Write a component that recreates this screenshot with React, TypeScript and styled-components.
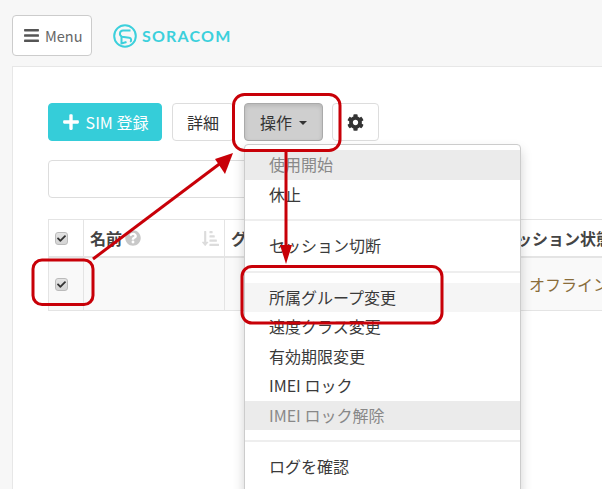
import React from "react";
import styled, { createGlobalStyle } from "styled-components";
import { FaBars, FaCheck, FaPlus, FaCog, FaQuestionCircle, FaSortAmountDownAlt } from "react-icons/fa";

const font = `"Noto Sans CJK JP", "Noto Sans", sans-serif`;

const GlobalStyle = createGlobalStyle`
  html, body {
    margin: 0;
    height: 100%;
    overflow: hidden;
    background: #f7f7f7;
  }
  * { box-sizing: border-box; }
`;

const items = [
  { label: "使用開始", state: "disabled" },
  { label: "休止" },
  { divider: true },
  { label: "セッション切断" },
  { divider: true },
  { label: "所属グループ変更", state: "hover" },
  { label: "速度クラス変更" },
  { label: "有効期限変更" },
  { label: "IMEI ロック" },
  { label: "IMEI ロック解除", state: "disabled" },
  { divider: true },
  { label: "ログを確認" },
  { label: "デバイス" },
];

export default function App() {
  return (
    <>
      <GlobalStyle />
      <Page>
        <Header>
          <MenuButton>
            <FaBars size={17} color="#555" />
            Menu
          </MenuButton>
          <Logo>
            <svg width="24" height="24" viewBox="0 0 24 24" fill="none" stroke="#3cd0dc" strokeWidth="2">
              <circle cx="12" cy="12" r="10.8" />
              <path d="M17.5 6.5H10a3.2 3.2 0 0 0-1 6.2l7.2 1a2.4 2.4 0 0 1 1 4.3" />
              <path d="M8.5 13v6.5l5-1.5" />
            </svg>
            <LogoText>SORACOM</LogoText>
          </Logo>
        </Header>
        <Panel>
          <Toolbar>
            <PrimaryButton>
              <FaPlus size={18} color="#fff" />
              SIM 登録
            </PrimaryButton>
            <Button>詳細</Button>
            <ActiveButton>
              操作
              <Caret />
            </ActiveButton>
            <GearButton>
              <FaCog size={17} color="#333" />
            </GearButton>
          </Toolbar>
          <SearchBox />
          <Table>
            <HeadRow>
              <CheckCell>
                <CheckMark>
                  <FaCheck size={9} color="#333" />
                </CheckMark>
              </CheckCell>
              <NameCell>
                名前
                <FaQuestionCircle size={16} color="#c8c8c8" />
                <SortIcon>
                  <FaSortAmountDownAlt size={17} color="#dcdcdc" />
                </SortIcon>
              </NameCell>
              <GroupCell>グループ</GroupCell>
              <StatusCell>セッション状態</StatusCell>
            </HeadRow>
            <BodyRow>
              <CheckCell>
                <CheckMark>
                  <FaCheck size={9} color="#333" />
                </CheckMark>
              </CheckCell>
              <NameCell />
              <GroupCell />
              <OfflineCell>オフライン</OfflineCell>
            </BodyRow>
          </Table>
        </Panel>
        <Dropdown>
          {items.map((item, i) =>
            item.divider ? <Divider key={i} /> : <Item key={i} $state={item.state}>{item.label}</Item>
          )}
        </Dropdown>
        <Annotations viewBox="0 0 602 489" width="602" height="489">
          <g fill="none" stroke="#c80008" strokeWidth="3">
            <rect x="233.5" y="94.5" width="106.5" height="56" rx="11" />
            <rect x="33" y="260" width="60" height="44.5" rx="9" />
            <rect x="242" y="266.5" width="200" height="56.5" rx="10" />
            <path d="M93 259L222 162" />
            <path d="M286 152V250" />
          </g>
          <path d="M233 153L215 159L225 174Z" fill="#c80008" />
          <path d="M286 264L280 245H292Z" fill="#c80008" />
        </Annotations>
      </Page>
    </>
  );
}

//#region components

const Page = styled.div`
  position: relative;
  width: 602px;
  height: 489px;
  overflow: hidden;
  padding: 15px 0 0 12px;
  font-family: ${font};
`;

const Header = styled.div`
  display: flex;
  align-items: center;
  gap: 21px;
  height: 41px;
`;

const MenuButton = styled.div`
  display: flex;
  align-items: center;
  gap: 5px;
  width: 80px;
  height: 41px;
  padding-left: 10px;
  background: #fff;
  border: 1px solid #ccc;
  border-radius: 4px;
  font-size: 14.5px;
  color: #666;
`;

const Logo = styled.div`
  display: flex;
  align-items: center;
  gap: 5px;
`;

const LogoText = styled.span`
  font-family: "Lato", sans-serif;
  font-size: 16px;
  font-weight: 700;
  letter-spacing: 1.2px;
  color: #3cd0dc;
`;

const Panel = styled.div`
  width: 620px;
  height: 440px;
  margin-top: 10px;
  padding: 36px 0 0 35px;
  background: #fff;
  border: 1px solid #e7e7e7;
`;

const Toolbar = styled.div`
  display: flex;
  align-items: center;
`;

const Button = styled.div`
  display: flex;
  align-items: center;
  justify-content: center;
  width: 62px;
  height: 38px;
  margin-left: 10px;
  background: #fff;
  border: 1px solid #ddd;
  border-radius: 4px;
  font-size: 16px;
  color: #333;
`;

const PrimaryButton = styled(Button)`
  gap: 6px;
  width: 114px;
  margin-left: 0;
  background: #35cdd9;
  border-color: #35cdd9;
  color: #fff;
`;

const ActiveButton = styled(Button)`
  gap: 7px;
  width: 79px;
  margin-left: 10px;
  background: #cfcfcf;
  border-color: #aaa;
  box-shadow: inset 0 2px 4px rgba(0, 0, 0, 0.12);
`;

const GearButton = styled(Button)`
  width: 47px;
  margin-left: 9px;
`;

const Caret = styled.span`
  width: 0;
  height: 0;
  margin-top: 2px;
  border-top: 4px solid #333;
  border-left: 4px solid transparent;
  border-right: 4px solid transparent;
`;

const SearchBox = styled.div`
  width: 400px;
  height: 38px;
  margin-top: 19px;
  background: #fff;
  border: 1px solid #ddd;
  border-radius: 4px;
`;

const Table = styled.div`
  width: 580px;
  margin-top: 21px;
  border: 1px solid #e4e4e4;
  border-right: 0;
`;

const HeadRow = styled.div`
  display: grid;
  grid-template-columns: 35px 141px 239px 1fr;
  height: 38px;
  border-bottom: 2px solid #e4e4e4;
  font-size: 16px;
  font-weight: 700;
  color: #444;
`;

const BodyRow = styled(HeadRow)`
  height: 52px;
  border-bottom: 0;
  background: #f9f9f9;
  font-weight: 400;
`;

const Cell = styled.div`
  display: flex;
  align-items: center;
  min-width: 0;
  white-space: nowrap;
  overflow: hidden;
  border-right: 1px solid #e4e4e4;
`;

const CheckCell = styled(Cell)`
  padding-left: 6px;
`;

const CheckMark = styled.span`
  display: flex;
  align-items: center;
  justify-content: center;
  width: 13px;
  height: 13px;
  background: linear-gradient(#e4e4e4, #d4d4d4);
  border: 1px solid #bbb;
  border-radius: 3px;
`;

const NameCell = styled(Cell)`
  gap: 3px;
  padding: 0 5px 0 6px;
`;

const GroupCell = styled(Cell)`
  padding-left: 6px;
`;

const StatusCell = styled(Cell)`
  padding-left: 36px;
  border-right: 0;
`;

const OfflineCell = styled(StatusCell)`
  padding-left: 65px;
  color: #8a6d3b;
`;

const SortIcon = styled.span`
  display: flex;
  margin-left: auto;
`;

const Dropdown = styled.div`
  position: absolute;
  left: 244px;
  top: 144px;
  width: 277px;
  height: 380px;
  padding: 5px 0;
  background: #fff;
  border: 1px solid #ccc;
  border-radius: 4px;
  box-shadow: 0 6px 12px rgba(0, 0, 0, 0.18);
`;

const Item = styled.div<{ $state?: string }>`
  height: 29.5px;
  padding-left: 24px;
  font-size: 16px;
  line-height: 28.5px;
  white-space: nowrap;
  color: ${(p) => (p.$state === "disabled" ? "#888" : "#3a3a3a")};
  background: ${(p) =>
    p.$state === "disabled" ? "#ebebeb" : p.$state === "hover" ? "#f5f5f5" : "transparent"};
`;

const Divider = styled.div`
  height: 2px;
  margin: 10px 0;
  background: #eee;
`;

const Annotations = styled.svg`
  position: absolute;
  left: 0;
  top: 0;
`;

//#endregion
